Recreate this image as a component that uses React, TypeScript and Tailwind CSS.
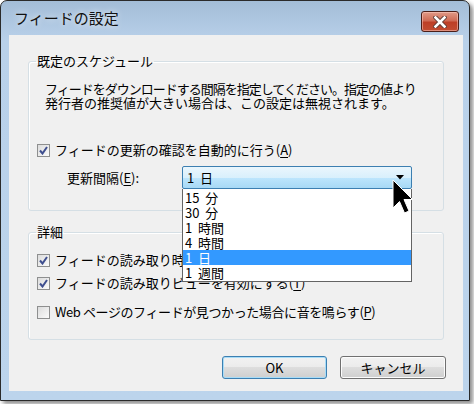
import React from 'react';

const font = "font-['Noto_Sans_CJK_JP','Noto_Sans',sans-serif]";

function Accel({ children }: { children: React.ReactNode }) {
  return <span className="underline underline-offset-[2px]">{children}</span>;
}

function CheckBox({ checked }: { checked?: boolean }) {
  return (
    <span className="flex h-[13px] w-[13px] shrink-0 items-center justify-center border border-[#8e8f8f] bg-gradient-to-br from-[#dcdcdc] to-[#fbfbfb]">
      {checked ? (
        <svg width="9" height="9" viewBox="0 0 9 9">
          <path d="M1 4.5 L3.5 7.5 L8 1" fill="none" stroke="#3f4f8f" strokeWidth="2" />
        </svg>
      ) : null}
    </span>
  );
}

function CheckRow({ checked, children, className }: { checked?: boolean; children: React.ReactNode; className?: string }) {
  return (
    <div className={`ml-[8px] flex h-[16px] items-center gap-[5px] whitespace-nowrap ${className ?? ''}`}>
      <CheckBox checked={checked} />
      <span className="leading-[16px]">{children}</span>
    </div>
  );
}

function Button({ children, isDefault, className }: { children: React.ReactNode; isDefault?: boolean; className?: string }) {
  return (
    <button
      className={`h-[23px] rounded-[3px] border text-[13px] leading-none text-black bg-[linear-gradient(#f2f2f2,#ebebeb_50%,#dddddd_50%,#cfcfcf)] ${
        isDefault ? 'border-[#3c7fb1] shadow-[inset_0_0_0_1px_#a8dcf7]' : 'border-[#707070] shadow-[inset_0_0_0_1px_#fcfcfc]'
      } ${className ?? ''}`}
    >
      {children}
    </button>
  );
}

const intervals = ['15 分', '30 分', '1 時間', '4 時間', '1 日', '1 週間'];

export default function App() {
  return (
    <div className={`h-[404px] w-[474px] bg-white ${font} text-[13px] text-black`}>
      <div className="flex h-[401px] w-[470px] flex-col rounded-t-[7px] border border-[#2a2a2a] bg-[linear-gradient(#a3bdd7,#b9d1ea_40px,#bcd4ec)] shadow-[3px_3px_4px_rgba(0,0,0,0.45)]">
        {/* caption */}
        <div className="flex h-[34px] shrink-0 items-start justify-between pl-[13px]">
          <span className="mt-[7px] text-[15px] leading-[20px] text-[#111] [text-shadow:0_0_6px_rgba(255,255,255,0.9)]">フィードの設定</span>
          <div className="mr-[10px] mt-[10px] flex h-[21px] w-[38px] items-center justify-center rounded-[3px] border border-[#4b1e18] bg-[linear-gradient(#e09a88,#cf6b55_45%,#bd3f27_55%,#c24c32)] shadow-[inset_0_0_0_1px_rgba(255,210,200,0.5)]">
            <svg width="14" height="12" viewBox="0 0 14 12">
              <path d="M2.5 1.5 L11.5 10.5 M11.5 1.5 L2.5 10.5" stroke="#5a3a34" strokeWidth="4.4" strokeLinecap="square" />
              <path d="M2.5 1.5 L11.5 10.5 M11.5 1.5 L2.5 10.5" stroke="#ffffff" strokeWidth="2.6" strokeLinecap="square" />
            </svg>
          </div>
        </div>

        {/* client */}
        <div className="ml-[8px] flex h-[356px] w-[454px] flex-col bg-[#f0f0f0]">
          <fieldset className="ml-[19px] mt-[17px] h-[159px] w-[416px] rounded-[3px] border border-[#d5dfe5] shadow-[inset_1px_1px_0_#fff]">
            <legend className="ml-[7px] px-[1px] leading-[18px]">既定のスケジュール</legend>
            <p className="ml-[16px] mt-[12px] whitespace-nowrap leading-[14px] tracking-[-1px]">
              フィードをダウンロードする間隔を指定してください。指定の値より
              <br />
              <span className="tracking-normal">発行者の推奨値が大きい場合は、この設定は無視されます。</span>
            </p>
            <CheckRow checked className="mt-[32px]">
              フィードの更新の確認を自動的に行う(<Accel>A</Accel>)
            </CheckRow>
            <div className="mt-[8px] flex items-center">
              <span className="ml-[38px] w-[115px] whitespace-nowrap leading-[16px]">
                更新間隔(<Accel>E</Accel>):
              </span>
              <div className="relative h-[23px] w-[230px]">
                <div className="flex h-full w-full items-center rounded-[2px] border border-[#3c7fb1] bg-[linear-gradient(#eaf6fd,#d9f0fc_50%,#bee6fd_50%,#a7d9f5)] pl-[4px] pr-[6px]">
                  <span className="flex-1 whitespace-pre leading-none">1  日</span>
                  <svg width="8" height="5" viewBox="0 0 8 5" className="mr-[1px]">
                    <path d="M0 0 H8 L4 4.5 Z" fill="#000" />
                  </svg>
                </div>
                <div className="absolute left-0 top-[23px] z-10 flex w-[230px] flex-col border border-t-0 border-[#646464] bg-white py-px">
                  {intervals.map((item) => (
                    <div
                      key={item}
                      className={`h-[15px] whitespace-pre pl-[2px] leading-[15px] ${item === '1 日' ? 'bg-[#3399ff] text-white' : ''}`}
                    >
                      {item.replace(' ', '  ')}
                    </div>
                  ))}
                </div>
                {/* mouse pointer */}
                <svg width="22" height="36" viewBox="0 0 22 36" className="absolute left-[210px] top-[13px] z-20">
                  <path d="M1 1 L1 29 L7.5 22.5 L12.5 34 L17 32 L12 20.5 L20.5 20.5 Z" fill="#000" stroke="#fff" strokeWidth="1" />
                </svg>
              </div>
            </div>
          </fieldset>

          <fieldset className="ml-[19px] mt-[12px] h-[117px] w-[416px] rounded-[3px] border border-[#d5dfe5] shadow-[inset_1px_1px_0_#fff]">
            <legend className="ml-[7px] px-[1px] leading-[18px]">詳細</legend>
            {/* the rest of this label lies under the open list */}
            <CheckRow checked className="mt-[11px]">
              フィードの読み取り時に
            </CheckRow>
            <CheckRow checked className="mt-[7px]">
              フィードの読み取りビューを有効にする(<Accel>T</Accel>)
            </CheckRow>
            <CheckRow className="mt-[13px] tracking-[-0.4px]">
              Web ページのフィードが見つかった場合に音を鳴らす(<Accel>P</Accel>)
            </CheckRow>
          </fieldset>

          <div className="mt-[16px] flex justify-end gap-[13px] pr-[17px]">
            <Button isDefault className="w-[105px]">
              OK
            </Button>
            <Button className="w-[106px]">キャンセル</Button>
          </div>
        </div>
      </div>
    </div>
  );
}
